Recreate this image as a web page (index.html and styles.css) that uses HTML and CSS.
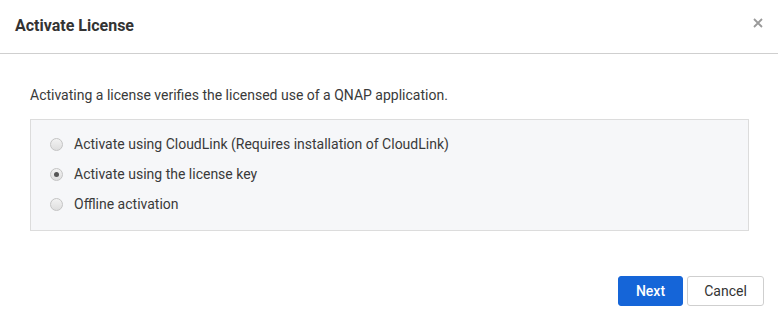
FILE: index.html
```html
<!DOCTYPE html>
<html>
<head>
<meta charset="utf-8">
<link rel="stylesheet" href="styles.css">
</head>
<body>
<div class="dialog">
  <div class="header">
    <div class="title">Activate License</div>
    <div class="close" aria-label="Close">
      <svg width="10" height="10" viewBox="0 0 10 10"><path d="M1 1L9 9M9 1L1 9" stroke="#9a9a9a" stroke-width="1.8" fill="none"/></svg>
    </div>
  </div>
  <div class="body">
    <p class="intro">Activating a license verifies the licensed use of a QNAP application.</p>
    <div class="options">
      <label class="option"><span class="radio"></span><span>Activate using CloudLink (Requires installation of CloudLink)</span></label>
      <label class="option"><span class="radio checked"></span><span>Activate using the license key</span></label>
      <label class="option"><span class="radio"></span><span>Offline activation</span></label>
    </div>
  </div>
  <div class="footer">
    <button class="btn primary">Next</button>
    <button class="btn">Cancel</button>
  </div>
</div>
</body>
</html>
```
FILE: styles.css
```css
* { box-sizing: border-box; }
html, body { margin: 0; padding: 0; background: #fff; }
body { font-family: Roboto, "Liberation Sans", sans-serif; color: #333; }
.dialog { width: 778px; height: 320px; display: flex; flex-direction: column; }
.header {
  height: 54px;
  border-bottom: 1px solid #cfcfcf;
  display: flex;
  align-items: flex-start;
  justify-content: space-between;
  padding: 16px 15px 0 15px;
}
.title { font-size: 16px; font-weight: 700; color: #333; line-height: 20px; }
.close { width: 10px; height: 10px; margin-top: 2px; display: flex; }
.body { padding: 32px 29px 0 30px; }
.intro { margin: 0; font-size: 14px; line-height: 18px; color: #3a3a3a; }
.options {
  margin-top: 15px;
  background: #f6f7f9;
  border: 1px solid #dcdcdc;
  height: 112px;
  padding: 15px 0 0 19px;
  display: flex;
  flex-direction: column;
  gap: 12px;
}
.option { display: flex; align-items: center; font-size: 14px; line-height: 18px; color: #3a3a3a; }
.radio {
  width: 13px; height: 13px; border-radius: 50%;
  border: 1px solid #c4c4c4;
  background: linear-gradient(#f2f2f2, #dedede);
  margin-right: 11px;
  position: relative;
  flex: none;
}
.radio.checked::after {
  content: "";
  position: absolute;
  left: 3px; top: 3px;
  width: 5px; height: 5px; border-radius: 50%;
  background: #555;
}
.footer {
  margin-top: auto;
  display: flex;
  justify-content: flex-end;
  gap: 4px;
  padding: 0 14px 14px 0;
}
.btn {
  height: 30px;
  font-family: Roboto, "Liberation Sans", sans-serif;
  font-size: 14px;
  border-radius: 3px;
  border: 1px solid #cfcfcf;
  background: #fff;
  color: #333;
  padding: 0;
  width: 77px;
}
.btn.primary { background: #1565d8; border-color: #1565d8; color: #fff; width: 65px; font-weight: 500; }
```
